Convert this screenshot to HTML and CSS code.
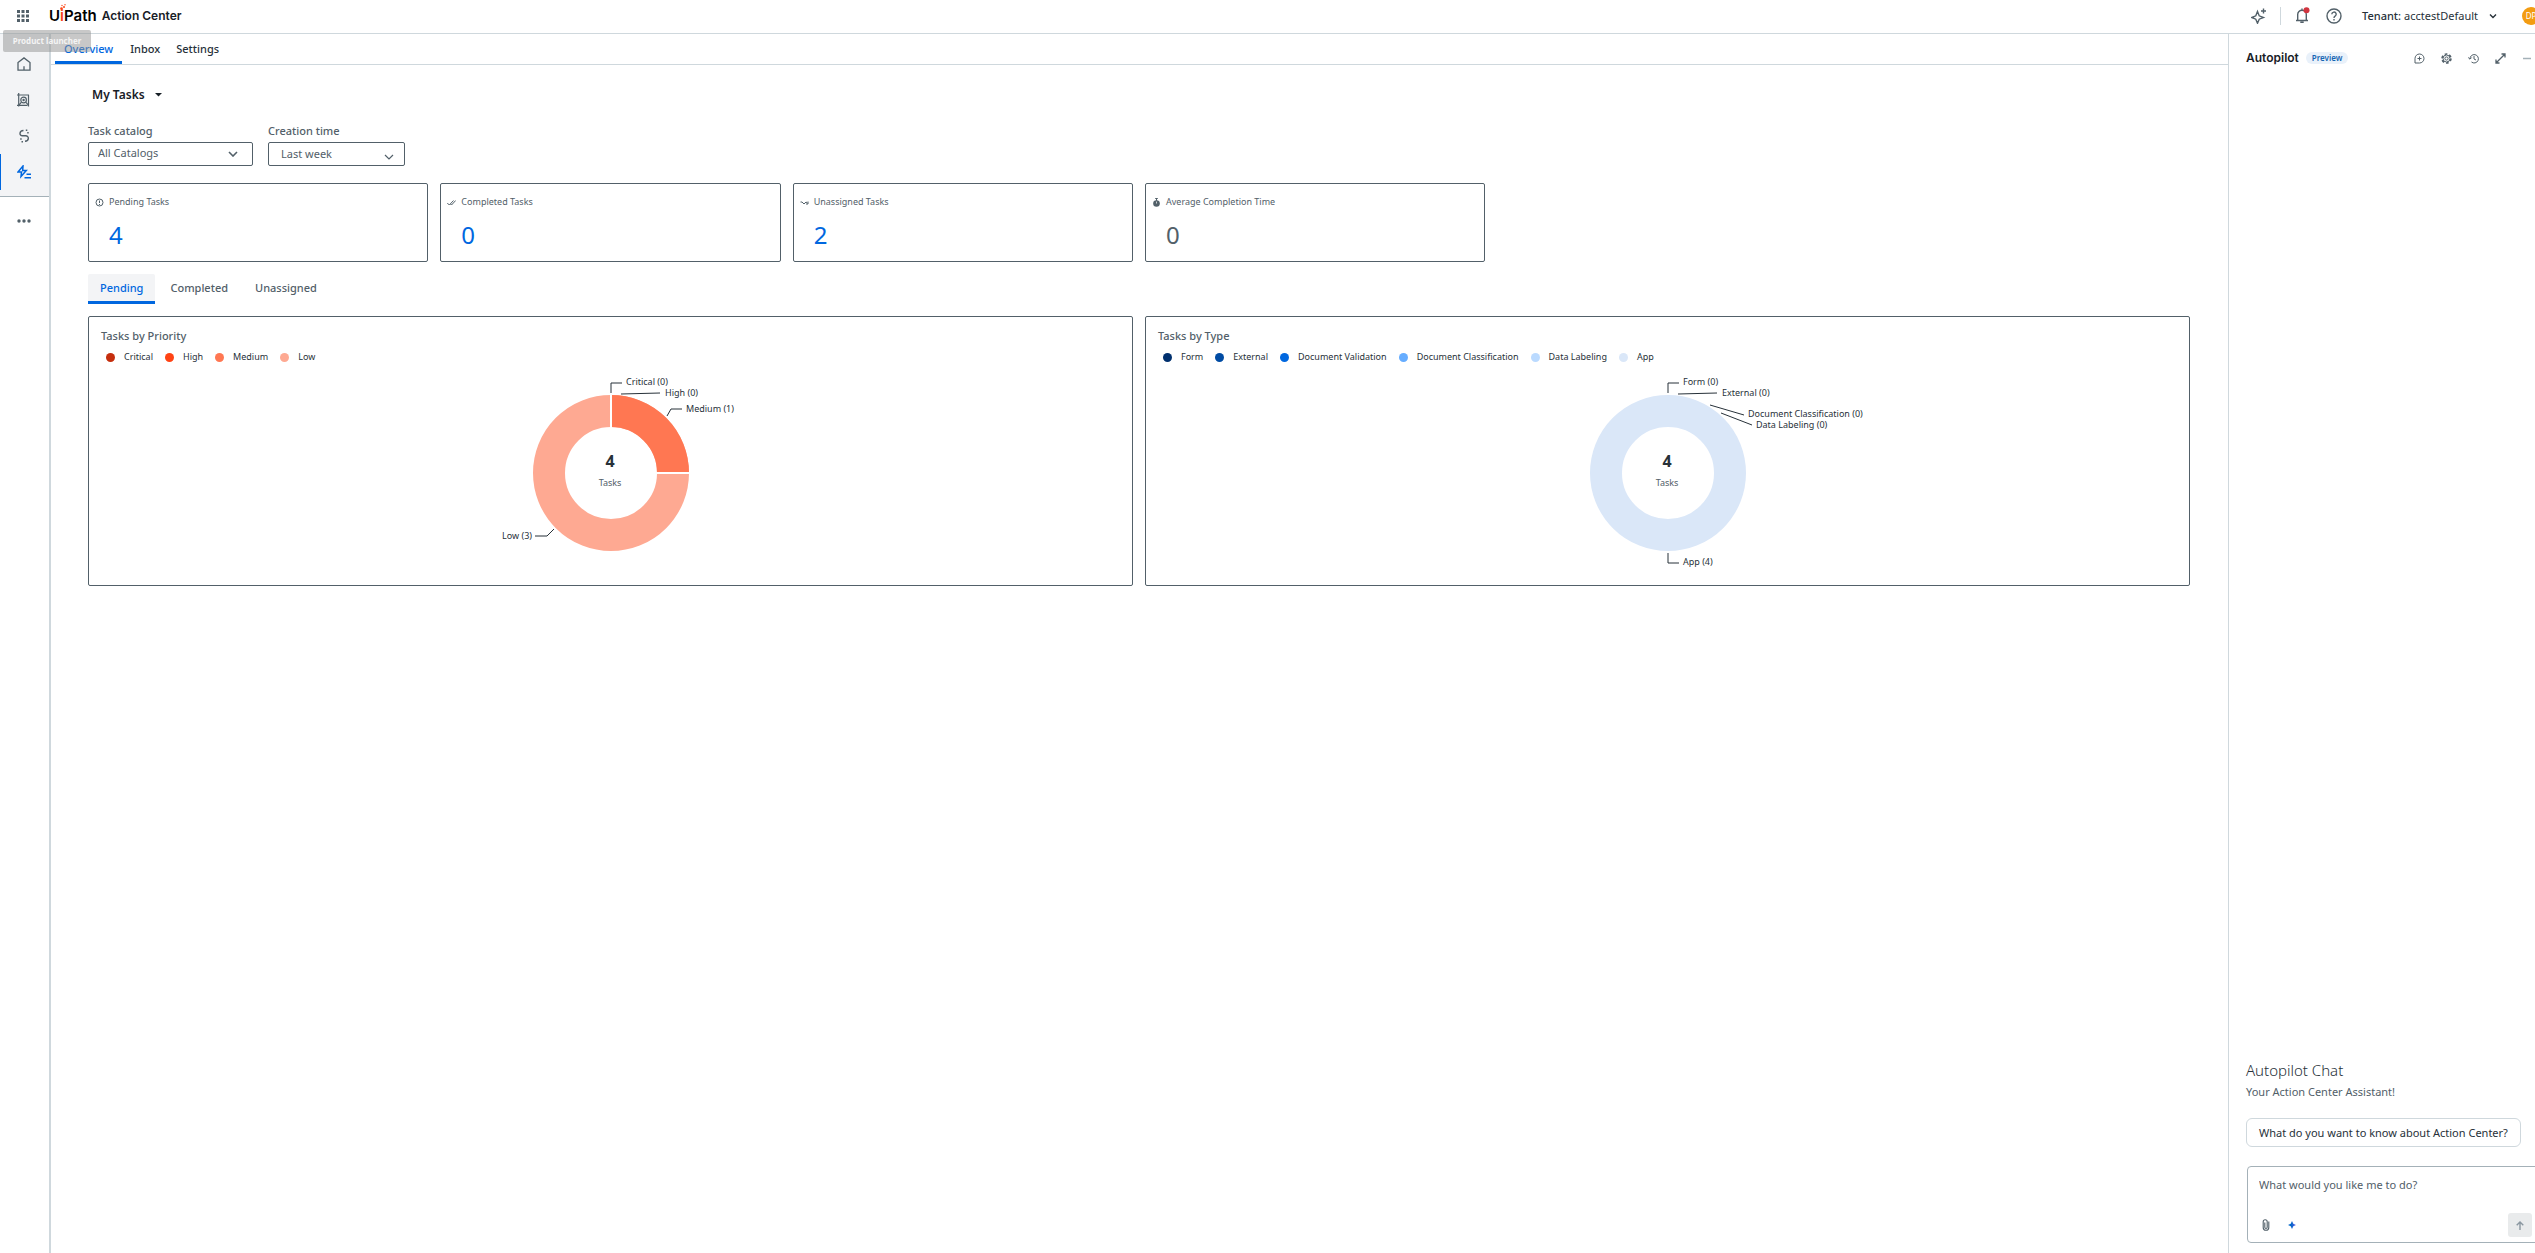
FILE: index.html
```html
<!DOCTYPE html>
<html lang="en">
<head>
    <meta charset="UTF-8">
    <meta name="viewport" content="width=device-width, initial-scale=1.0">
    <title>Action Center</title>
    <link rel="stylesheet" href="styles.css">
</head>
<body>
    <header class="topbar">
        <button class="icon-button launcher" aria-label="Product launcher">
            <svg width="12" height="12" viewBox="0 0 12 12" fill="#526069"><path d="M0 0h3v3H0zM4.500 0h3v3h-3zM9 0h3v3H9zM0 4.500h3v3H0zM4.500 4.500h3v3h-3zM9 4.500h3v3H9zM0 9h3v3H0zM4.500 9h3v3h-3zM9 9h3v3H9z"/></svg>
        </button>
        <div class="brand">
            <span class="logo">U<span class="logo-i">i<svg class="logo-spark" width="6" height="6" viewBox="0 0 6 6" fill="#fa4616"><circle cx="1.500" cy="4.500" r="1.300"/><circle cx="4" cy="3" r="1"/><circle cx="2" cy="1.500" r=".7"/><circle cx="5" cy=".8" r=".7"/></svg></span>Path</span>
            <span class="product">Action Center</span>
        </div>
        <div class="topbar-right">
            <button class="icon-button spark-button" aria-label="Autopilot">
                <svg width="16" height="16" viewBox="0 0 16 16" fill="none" stroke="#526069" stroke-width="1.400"><path d="M6.500 3.500L8.200 7.800 12.500 9.500 8.200 11.200 6.500 15.300 4.800 11.200.8 9.500 4.800 7.800z"/><path d="M12.500.5v5M10 3h5"/></svg>
            </button>
            <span class="divider"></span>
            <button class="icon-button bell" aria-label="Notifications">
                <svg width="16" height="18" viewBox="0 0 16 18" fill="none" stroke="#526069" stroke-width="1.400"><path d="M2 13.500h12M3.700 13V7.500a4.300 4.300 0 0 1 8.600 0V13M6.300 15.300h3.400M8 3V1.500"/><circle cx="12.500" cy="3.300" r="3" fill="#d1343f" stroke="none"/></svg>
            </button>
            <button class="icon-button" aria-label="Help">
                <svg width="16" height="16" viewBox="0 0 16 16" fill="none" stroke="#526069" stroke-width="1.400"><circle cx="8" cy="8" r="7"/><path d="M5.800 6.300a2.200 2.200 0 1 1 3.300 1.900C8.300 8.700 8 9 8 10"/><path d="M8 11v1.500"/></svg>
            </button>
            <button class="tenant"><b>Tenant:</b> acctestDefault
                <svg width="8" height="8" viewBox="0 0 8 8" fill="none" stroke="#273139" stroke-width="1.400"><path d="M1 2.500l3 3 3-3"/></svg>
            </button>
            <button class="avatar">DP</button>
        </div>
        <div class="tooltip">Product launcher</div>
    </header>

    <div class="layout">
        <nav class="rail">
            <div class="rail-top">
                <a class="rail-item" href="#" aria-label="Home"><svg width="14" height="14" viewBox="0 0 14 14" fill="none" stroke="#526069" stroke-width="1.300"><path d="M1 13.200V5.500L7 .9l6 4.600v7.700zM7 13V9.300"/></svg></a>
                <a class="rail-item" href="#" aria-label="Processes"><svg width="14" height="14" viewBox="0 0 14 14" fill="none" stroke="#526069" stroke-width="1.200"><path d="M1.700 0v13.500M0 2h12M0 12.300h10.500M11.500 2v11.500"/><circle cx="6.600" cy="7" r="2.800"/><circle cx="6.600" cy="7" r=".6"/><path d="M2 12l2.500-2.800M8.700 9.200l2.500 2.600"/></svg></a>
                <a class="rail-item" href="#" aria-label="Integrations"><svg width="14" height="14" viewBox="0 0 14 14" fill="none" stroke="#526069" stroke-width="1.400"><path d="M6.500 1.500C2 1.700 2 6.800 5.500 6.800h3.200c3.600 0 3.600 5.200-.7 5.500"/><path d="M8.800 1.300h1.500M10.200 3.800h1.500M3.200 10h1.500M4.500 12.700H6"/></svg></a>
                <a class="rail-item active" href="#" aria-label="Action Center"><svg width="14" height="14" viewBox="0 0 14 14" fill="none" stroke="#0067df" stroke-width="1.500"><path d="M6 1L1 7h3.500L4 11.500 9.300 5.500H5.700z"/><path d="M9.500 9.300H14M7.500 12.700H14"/></svg></a>
            </div>
            <button class="rail-more" aria-label="More"><svg width="14" height="4" viewBox="0 0 14 4" fill="#526069"><circle cx="2" cy="2" r="1.700"/><circle cx="7" cy="2" r="1.700"/><circle cx="12" cy="2" r="1.700"/></svg></button>
        </nav>

        <main class="main">
            <div class="page-tabs">
                <a class="page-tab active" href="#">Overview</a>
                <a class="page-tab" href="#">Inbox</a>
                <a class="page-tab" href="#">Settings</a>
            </div>
            <div class="content">
                <button class="scope">My Tasks <svg width="7" height="4" viewBox="0 0 7 4" fill="#182027"><path d="M0 0h7L3.500 3.500z"/></svg></button>

                <div class="filters">
                    <div class="field catalog">
                        <label for="catalog">Task catalog</label>
                        <div class="select-box">
                            <select id="catalog"><option>All Catalogs</option></select>
                            <svg class="select-arrow" width="10" height="6" viewBox="0 0 10 6" fill="none" stroke="#526069" stroke-width="1.600"><path d="M1 1l4 4 4-4"/></svg>
                        </div>
                    </div>
                    <div class="field time">
                        <label for="time">Creation time</label>
                        <div class="select-box">
                            <select id="time"><option>Last week</option></select>
                            <svg class="select-arrow" width="10" height="6" viewBox="0 0 10 6" fill="none" stroke="#526069" stroke-width="1.200"><path d="M1 1l4 4 4-4"/></svg>
                        </div>
                    </div>
                </div>

                <div class="cards">
                    <section class="card">
                        <div class="card-label"><svg width="9" height="9" viewBox="0 0 9 9" fill="none" stroke="#526069"><circle cx="4.500" cy="4.500" r="3.500"/><path d="M4.500 2.500v2.500M4.500 6v1"/></svg>Pending Tasks</div>
                        <a class="card-value" href="#">4</a>
                    </section>
                    <section class="card">
                        <div class="card-label"><svg width="9" height="9" viewBox="0 0 9 9" fill="none" stroke="#526069"><path d="M.3 5l2 2L6.500 2.500M3.500 6l1 1L8.700 2.500"/></svg>Completed Tasks</div>
                        <a class="card-value" href="#">0</a>
                    </section>
                    <section class="card">
                        <div class="card-label"><svg width="9" height="9" viewBox="0 0 9 9" fill="none" stroke="#526069"><path d="M.5 4h1.500l2 2 2-2 1.500 1"/><path d="M8 3.500V6H6"/></svg>Unassigned Tasks</div>
                        <a class="card-value" href="#">2</a>
                    </section>
                    <section class="card">
                        <div class="card-label"><svg width="9" height="9" viewBox="0 0 9 9" fill="#526069"><circle cx="4.500" cy="5.500" r="3.300"/><path d="M3.200 0h2.600v1H3.200zM4 1h1v2H4z"/><path d="M4.500 3.500v2" stroke="#fff" stroke-width=".7"/></svg>Average Completion Time</div>
                        <span class="card-value plain">0</span>
                    </section>
                </div>

                <div class="status-tabs">
                    <button class="status-tab active">Pending</button>
                    <button class="status-tab">Completed</button>
                    <button class="status-tab">Unassigned</button>
                </div>

                <div class="charts">
                    <section class="chart">
                        <h2>Tasks by Priority</h2>
                        <ul class="legend">
                            <li class="critical">Critical</li>
                            <li class="high">High</li>
                            <li class="medium">Medium</li>
                            <li class="low">Low</li>
                        </ul>
                        <svg class="donut" width="400" height="210" viewBox="-200 -104 400 210">
                            <circle r="62" fill="none" stroke="#fea992" stroke-width="32"/>
                            <path d="M0-62A62 62 0 0 1 62 0" fill="none" stroke="#ff7752" stroke-width="32"/>
                            <path d="M0-79v34M45 0h34" stroke="#fff" stroke-width="2"/>
                            <g class="leader">
                                <path d="M0-80v-10h11"/>
                                <path d="M10-79l39-1"/>
                                <path d="M56-57l4-7h11"/>
                                <path d="M-57 56l-7 7h-12"/>
                            </g>
                            <text x="15" y="-88">Critical (0)</text>
                            <text x="54" y="-77">High (0)</text>
                            <text x="75" y="-61">Medium (1)</text>
                            <text x="-79" y="66" text-anchor="end">Low (3)</text>
                            <text class="total" x="-1" y="-6">4</text>
                            <text class="unit" x="-1" y="13">Tasks</text>
                        </svg>
                    </section>
                    <section class="chart">
                        <h2>Tasks by Type</h2>
                        <ul class="legend">
                            <li class="form">Form</li>
                            <li class="external">External</li>
                            <li class="validation">Document Validation</li>
                            <li class="classification">Document Classification</li>
                            <li class="labeling">Data Labeling</li>
                            <li class="app">App</li>
                        </ul>
                        <svg class="donut" width="400" height="210" viewBox="-200 -104 400 210">
                            <circle r="62" fill="none" stroke="#dae7f8" stroke-width="32"/>
                            <g class="leader">
                                <path d="M0-80v-10h11"/>
                                <path d="M10-79l39-1"/>
                                <path d="M42-68l34 10"/>
                                <path d="M53-60l31 12"/>
                                <path d="M0 80v10h11"/>
                            </g>
                            <text x="15" y="-88">Form (0)</text>
                            <text x="54" y="-77">External (0)</text>
                            <text x="80" y="-56">Document Classification (0)</text>
                            <text x="88" y="-45">Data Labeling (0)</text>
                            <text x="15" y="92">App (4)</text>
                            <text class="total" x="-1" y="-6">4</text>
                            <text class="unit" x="-1" y="13">Tasks</text>
                        </svg>
                    </section>
                </div>
            </div>
        </main>

        <aside class="autopilot">
            <div class="autopilot-head">
                <h2>Autopilot</h2>
                <span class="preview">Preview</span>
                <div class="autopilot-tools">
                    <button class="icon-button" aria-label="New chat"><svg width="11" height="11" viewBox="0 0 11 11" fill="none" stroke="#526069"><path d="M1 10V5.500A4.500 4.500 0 1 1 5.500 10zM5.500 3.500v4M3.500 5.500h4"/></svg></button>
                    <button class="icon-button" aria-label="Settings"><svg width="11" height="11" viewBox="0 0 11 11" fill="none" stroke="#526069"><circle cx="5.500" cy="5.500" r="1.600"/><circle cx="5.500" cy="5.500" r="3.500"/><circle cx="5.500" cy="5.500" r="4.500" stroke-width="1.600" stroke-dasharray="2.700 2"/></svg></button>
                    <button class="icon-button" aria-label="History"><svg width="11" height="11" viewBox="0 0 11 11" fill="none" stroke="#526069"><path d="M2 6a4.200 4.200 0 1 1 1.500 3M.2 4.500L2 6.200 3.700 4.500M6 3v3l2 1"/></svg></button>
                    <button class="icon-button" aria-label="Expand"><svg width="11" height="11" viewBox="0 0 11 11" fill="none" stroke="#526069" stroke-width="1.300"><path d="M6.500 1H10v3.500M10 1L1 10M1 6.500V10h3.500"/></svg></button>
                    <button class="icon-button" aria-label="Minimize"><svg width="11" height="11" viewBox="0 0 11 11" stroke="#a4b1b8" stroke-width="1.500"><path d="M1 5.500h8"/></svg></button>
                </div>
            </div>
            <div class="chat">
                <h3>Autopilot Chat</h3>
                <p>Your Action Center Assistant!</p>
                <button class="suggestion">What do you want to know about Action Center?</button>
                <div class="prompt">
                    <textarea rows="1" placeholder="What would you like me to do?" aria-label="Prompt"></textarea>
                    <div class="prompt-tools">
                        <button class="icon-button" aria-label="Attach"><svg width="8" height="12" viewBox="0 0 8 12" fill="none" stroke="#526069" stroke-width="1.100"><path d="M6.800 2.500v6a2.800 2.800 0 0 1-5.600 0V2.800a2 2 0 0 1 4 0v5.500a1.200 1.200 0 0 1-2.400 0V3.500"/></svg></button>
                        <button class="icon-button" aria-label="Model"><svg width="8" height="8" viewBox="0 0 8 8"><defs><linearGradient id="spark"><stop offset=".4" stop-color="#0067c9"/><stop offset="1" stop-color="#6b5be6"/></linearGradient></defs><path fill="url(#spark)" d="M4 0l1.300 2.700L8 4 5.300 5.300 4 8 2.700 5.300 0 4l2.700-1.300z"/></svg></button>
                        <button class="send" aria-label="Send"><svg width="8" height="9" viewBox="0 0 8 9" fill="none" stroke="#8a97a0" stroke-width="1.400"><path d="M4 9V1M.7 4.300L4 1l3.300 3.300"/></svg></button>
                    </div>
                </div>
                <small>Autopilot can make mistakes. Please double check.</small>
            </div>
        </aside>
    </div>
</body>
</html>
```
FILE: styles.css
```css
* {
    box-sizing: border-box;
}
body {
    margin: 0;
    height: 100vh;
    display: flex;
    flex-direction: column;
    overflow: hidden;
    font-family: "Noto Sans", sans-serif;
    font-size: 11px;
    line-height: 16px;
    color: #526069;
    background: #fff;
}
button, select, textarea {
    font: inherit;
    color: inherit;
    background: none;
    border: 0;
    padding: 0;
    margin: 0;
}
button {
    cursor: pointer;
}
a {
    color: inherit;
    text-decoration: none;
}
h2, h3, p, ul {
    margin: 0;
    padding: 0;
}
svg {
    display: block;
    flex: none;
}
.icon-button {
    display: flex;
    align-items: center;
    justify-content: center;
}

/* top bar */
.topbar {
    position: relative;
    display: flex;
    align-items: center;
    height: 34px;
    flex: none;
    margin-right: -5px;
    padding-left: 17px;
    padding-bottom: 2px;
    border-bottom: 1px solid #cfd8dd;
}
.brand {
    display: flex;
    align-items: center;
    gap: 5px;
    margin-left: 20px;
    color: #000;
}
.logo {
    font-family: Inter, sans-serif;
    font-size: 15px;
    font-weight: 600;
}
.logo-i {
    position: relative;
    color: #fa4616;
}
.logo-spark {
    position: absolute;
    left: 0;
    top: -2px;
}
.product {
    font-family: Inter, sans-serif;
    font-size: 12px;
    font-weight: 600;
    color: #182027;
}
.topbar-right {
    display: flex;
    align-items: center;
    margin-left: auto;
}
.divider {
    width: 1px;
    height: 18px;
    margin: 0 13px;
    background: #cfd8dd;
}
.bell {
    margin-right: 16px;
}
.tenant {
    display: flex;
    align-items: center;
    gap: 3px;
    margin: 0 25px 0 20px;
    color: #273139;
}
.tenant b {
    font-weight: 500;
}
.tenant svg {
    margin-left: 8px;
}
.avatar {
    width: 18px;
    height: 18px;
    border-radius: 50%;
    background: #f39c12;
    color: #fff;
    font-size: 8px;
    line-height: 18px;
}
.tooltip {
    position: absolute;
    z-index: 2;
    left: 3px;
    top: 30px;
    width: 88px;
    height: 22px;
    border-radius: 2px;
    background: rgba(145, 145, 145, 0.5);
    color: #f4f4f4;
    font-size: 8px;
    font-weight: 700;
    line-height: 22px;
    text-align: center;
}

.layout {
    flex: 1;
    min-height: 0;
    display: grid;
    grid-template-columns: 51px 1fr 307px;
}

/* left rail */
.rail {
    border-right: 2px solid #cfd8dd;
}
.rail-top {
    padding: 12px 0 6px;
    background: #f3f4f6;
    border-bottom: 1px solid #a4b1b8;
}
.rail-item {
    display: flex;
    align-items: center;
    height: 36px;
    padding-left: 17px;
}
.rail-item.active {
    border-left: 1px solid #0067df;
    padding-left: 16px;
}
.rail-more {
    display: flex;
    align-items: center;
    width: 100%;
    height: 48px;
    padding-left: 17px;
}

/* main area */
.page-tabs {
    display: flex;
    height: 31px;
    padding-left: 4px;
    border-bottom: 1px solid #cfd8dd;
    color: #273139;
    font-weight: 500;
}
.page-tab {
    padding: 7px 8px 0;
    border-bottom: 3px solid transparent;
}
.page-tab.active {
    padding: 7px 9px 0;
    color: #0067df;
    border-color: #0067df;
}
.content {
    padding: 20px 38px 20px 37px;
}
.scope {
    display: flex;
    align-items: center;
    gap: 10px;
    padding-left: 4px;
    color: #182027;
    font-size: 12px;
    font-weight: 600;
    line-height: 20px;
}
.filters {
    display: flex;
    gap: 15px;
    margin-top: 16px;
}
.field {
    width: 165px;
}
.field.time {
    width: 137px;
}
.field label {
    display: block;
    height: 21px;
    line-height: 20px;
    font-weight: 500;
}
.select-box {
    position: relative;
}
.select-box select {
    display: block;
    width: 100%;
    height: 24px;
    padding-left: 9px;
    padding-bottom: 2px;
    border: 1px solid #526069;
    border-radius: 2px;
    appearance: none;
}
.time select {
    padding-left: 12px;
    padding-bottom: 0;
}
.select-arrow {
    position: absolute;
    right: 15px;
    top: 9px;
    pointer-events: none;
}
.time .select-arrow {
    right: 11px;
    top: 12px;
}
.cards {
    display: grid;
    grid-template-columns: repeat(6, 1fr);
    gap: 12px;
    margin-top: 17px;
}
.card {
    height: 79px;
    padding: 10px 6px;
    border: 1px solid #526069;
    border-radius: 2px;
}
.card-label {
    display: flex;
    align-items: center;
    gap: 5px;
    font-size: 9px;
}
.card-value {
    display: block;
    margin-top: 9px;
    padding-left: 14px;
    font-size: 24px;
    line-height: 32px;
    color: #0067df;
}
.card-value.plain {
    color: #526069;
}
.status-tabs {
    display: flex;
    gap: 3px;
    margin-top: 12px;
}
.status-tab {
    height: 30px;
    padding: 0 12px;
    border-bottom: 3px solid transparent;
    font-weight: 500;
}
.status-tab.active {
    color: #0067df;
    background: #f3f4f6;
    border-color: #0067df;
    border-radius: 2px 2px 0 0;
}
.charts {
    display: grid;
    grid-template-columns: 1fr 1fr;
    gap: 12px;
    margin-top: 12px;
}
.chart {
    height: 270px;
    padding: 11px 12px;
    border: 1px solid #526069;
    border-radius: 2px;
}
.chart h2 {
    font-size: 11px;
    font-weight: 500;
}
.legend {
    display: flex;
    gap: 12px;
    margin-top: 5px;
    padding-left: 5px;
    list-style: none;
    font-size: 9px;
    color: #273139;
}
.legend li {
    display: flex;
    align-items: center;
    gap: 9px;
}
.legend li::before {
    content: "";
    width: 9px;
    height: 9px;
    border-radius: 50%;
    background: #ccc;
}
.legend .critical::before { background: #c52e0d; }
.legend .high::before { background: #ff4314; }
.legend .medium::before { background: #ff7752; }
.legend .low::before { background: #fea992; }
.legend .form::before { background: #00306e; }
.legend .external::before { background: #004ba3; }
.legend .validation::before { background: #0067df; }
.legend .classification::before { background: #66adff; }
.legend .labeling::before { background: #badaff; }
.legend .app::before { background: #dae7f8; }
.donut {
    margin: 4px auto 0;
    font-size: 9px;
    fill: #273139;
}
.leader {
    fill: none;
    stroke: #273139;
    stroke-width: 1;
}
.total, .unit {
    text-anchor: middle;
}
.total {
    font-size: 16px;
    font-weight: 700;
}
.unit {
    fill: #526069;
}

/* autopilot panel */
.autopilot {
    display: flex;
    flex-direction: column;
    border-left: 1px solid #cfd8dd;
    padding-left: 17px;
    min-height: 0;
    overflow: hidden;
}
.autopilot-head {
    display: flex;
    align-items: center;
    height: 48px;
}
.autopilot-head h2 {
    font-family: Inter, sans-serif;
    font-size: 12px;
    font-weight: 600;
    color: #182027;
}
.preview {
    margin-left: 7px;
    padding: 0 6px;
    border-radius: 6px;
    background: #e9f1fa;
    color: #1665b3;
    font-size: 8px;
    font-weight: 600;
    line-height: 12px;
}
.autopilot-tools {
    display: flex;
    gap: 16px;
    margin-left: auto;
    padding-right: 2px;
}
.chat {
    display: flex;
    flex-direction: column;
    align-items: flex-start;
    margin-top: auto;
    margin-bottom: -12px;
}
.chat h3 {
    font-size: 15px;
    font-weight: 300;
    line-height: 20px;
    color: #273139;
}
.chat p {
    margin-top: 4px;
}
.suggestion {
    height: 29px;
    margin-top: 18px;
    padding: 0 12px;
    border: 1px solid #cfd8dd;
    border-radius: 6px;
    color: #273139;
}
.prompt {
    width: 320px;
    height: 77px;
    margin: 19px 0 0 1px;
    padding: 10px 11px;
    border: 1px solid #a4b1b8;
    border-radius: 4px;
}
.prompt textarea {
    display: block;
    width: 100%;
    height: 16px;
    resize: none;
    overflow: hidden;
}
.prompt textarea::placeholder {
    color: #526069;
    opacity: 1;
}
.prompt-tools {
    display: flex;
    align-items: center;
    gap: 18px;
    height: 24px;
    margin: 20px 23px 0 3px;
}
.send {
    display: flex;
    align-items: center;
    justify-content: center;
    width: 24px;
    height: 24px;
    margin-left: auto;
    border-radius: 3px;
    background: #e9ebec;
}
.chat small {
    margin-top: 6px;
    padding-left: 20px;
    font-size: 8px;
}
```
